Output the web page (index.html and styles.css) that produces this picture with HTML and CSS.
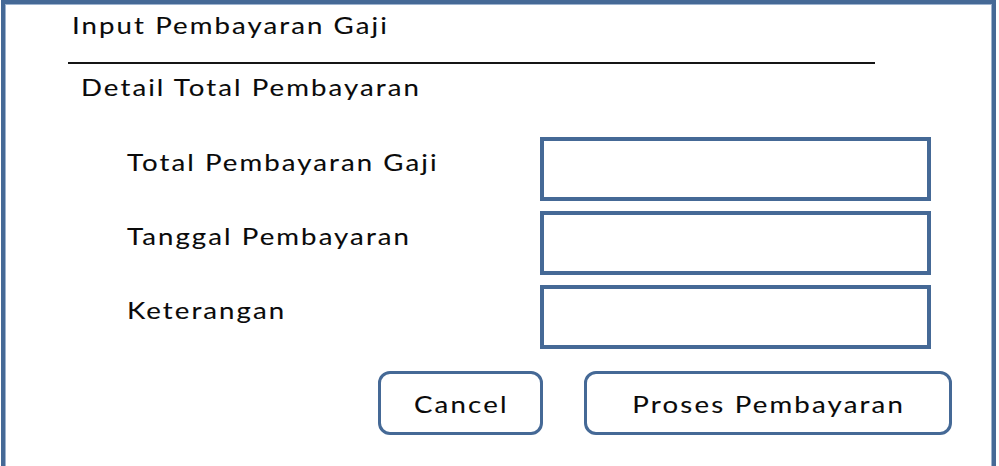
FILE: index.html
```html
<!DOCTYPE html>
<html lang="id">
<head>
<meta charset="utf-8">
<title>Input Pembayaran Gaji</title>
<link rel="stylesheet" href="styles.css">
</head>
<body>
  <div class="window">
    <div class="title"><span class="txt">Input Pembayaran Gaji</span></div>
    <div class="rule"></div>
    <div class="section"><span class="txt">Detail Total Pembayaran</span></div>

    <div class="form">
      <label class="label"><span class="txt">Total Pembayaran Gaji</span></label>
      <div class="field"></div>
      <label class="label"><span class="txt">Tanggal Pembayaran</span></label>
      <div class="field"></div>
      <label class="label"><span class="txt">Keterangan</span></label>
      <div class="field"></div>
    </div>

    <div class="actions">
      <button class="btn btn-cancel"><span class="txt">Cancel</span></button>
      <button class="btn btn-submit"><span class="txt">Proses Pembayaran</span></button>
    </div>
  </div>
</body>
</html>
```

FILE: styles.css
```css
html, body {
  margin: 0;
  padding: 0;
  overflow: hidden;
  background: #ffffff;
}

body {
  font-family: "Lato", "Liberation Sans", sans-serif;
  color: #0a0a0a;
  font-size: 24px;
  line-height: 30px;
}

/* wide-set lettering used by every caption on the form */
.txt {
  display: inline-block;
  letter-spacing: 1.8px;
  transform: scaleX(1.15);
  transform-origin: 0 50%;
  white-space: nowrap;
  -webkit-text-stroke: 0.1px currentColor;
}

/* outer window frame, open at the bottom edge */
.window {
  box-sizing: border-box;
  margin-left: 1px;
  width: 995px;
  height: 480px;
  border: 4px solid #456996;
  border-bottom: none;
  box-shadow: inset 1px 1px 0 #9db3cf, inset -1px 0 0 #9db3cf;
  display: flex;
  flex-direction: column;
}

.title {
  padding-top: 6px;
  padding-left: 67px;
}

.rule {
  margin-top: 22px;
  margin-left: 63px;
  width: 807px;
  height: 2px;
  background: #151515;
}

.section {
  margin-top: 8px;
  padding-left: 76px;
}

.form {
  margin-top: 35px;
  padding-left: 122px;
  display: grid;
  grid-template-columns: 413px 391px;
  grid-auto-rows: 64px;
  row-gap: 10px;
}

.label {
  padding-top: 10px;
}

.field {
  box-sizing: border-box;
  border: 4px solid #456996;
  background: #ffffff;
}

.actions {
  margin-top: 22px;
  padding-left: 373px;
  display: flex;
  gap: 41px;
}

.btn {
  box-sizing: border-box;
  height: 64px;
  border: 3px solid #456996;
  border-radius: 12px;
  background: #ffffff;
  font-family: inherit;
  font-size: 24px;
  color: #0a0a0a;
  padding: 0;
  display: flex;
  align-items: center;
  justify-content: center;
}

.btn .txt {
  letter-spacing: 1.9px;
  transform-origin: 50% 50%;
  padding-left: 2px;
}

.btn-cancel {
  width: 165px;
}

.btn-submit {
  width: 368px;
}
```
